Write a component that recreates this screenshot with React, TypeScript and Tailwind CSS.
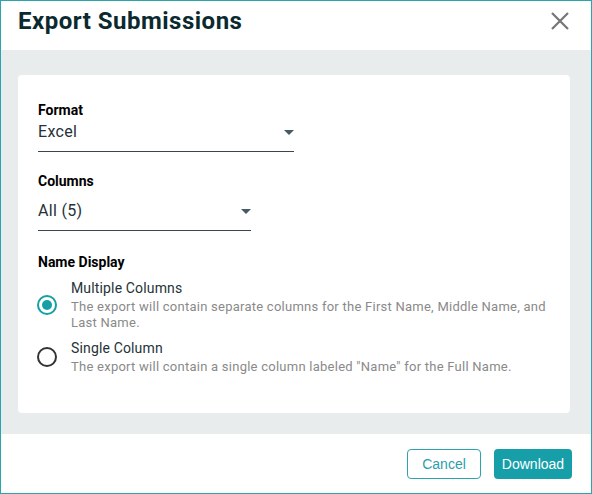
import React from "react";

const SelectField = ({
  label,
  value,
  width,
  gap,
}: {
  label: string;
  value: string;
  width: string;
  gap: string;
}) => (
  <div className="flex flex-col">
    <div className="text-[14px] leading-[20px] font-bold text-black">{label}</div>
    <div className={`${width} ${gap} flex items-center justify-between border-b border-[#37474f] pb-[7px]`}>
      <span className="text-[16px] leading-[24px] tracking-[0.3px] text-[#263238]">{value}</span>
      <svg width="10" height="5" viewBox="0 0 10 5">
        <path d="M0 0 L10 0 L5 5 Z" fill="#455a64" />
      </svg>
    </div>
  </div>
);

const RadioOption = ({
  checked,
  title,
  description,
}: {
  checked: boolean;
  title: string;
  description: string;
}) => (
  <div className="flex items-center gap-[14px]">
    <div
      className={`ml-[-1px] w-[20px] h-[20px] rounded-full border-2 flex items-center justify-center shrink-0 ${
        checked ? "border-[#169ea9]" : "border-[#333]"
      }`}
    >
      {checked && <div className="w-[10px] h-[10px] rounded-full bg-[#169ea9]" />}
    </div>
    <div className="flex flex-col">
      <div className="text-[14px] leading-[20px] tracking-[0.15px] text-[#263238]">{title}</div>
      <div className="text-[13px] leading-[16px] tracking-[0.25px] text-[#8a8a8a] mt-[1px]">{description}</div>
    </div>
  </div>
);

export default function App() {
  return (
    <div
      className="w-[592px] h-[494px] border border-[#2aa5ad] bg-white flex flex-col"
      style={{ fontFamily: "Roboto, 'Liberation Sans', sans-serif" }}
    >
      {/* Header */}
      <div className="h-[49px] flex items-start justify-between pl-[17px] pr-[21px] pt-[4px]">
        <h1 className="text-[24px] leading-[32px] font-bold tracking-[0.5px] text-[#0b2a2f]">Export Submissions</h1>
        <svg width="20" height="20" viewBox="0 0 20 20" className="mt-[6px]">
          <path d="M2 2 L18 18 M18 2 L2 18" stroke="#757575" strokeWidth="2.2" />
        </svg>
      </div>

      {/* Body */}
      <div className="h-[384px] bg-[#e9eced] pl-[17px] pr-[21px] pt-[25px]">
        <div className="h-[338px] bg-white rounded-[4px] px-[20px] pt-[25px]">
          <SelectField label="Format" value="Excel" width="w-[256px]" gap="mt-0" />
          <div className="h-[19px]" />
          <SelectField label="Columns" value="All (5)" width="w-[213px]" gap="mt-[8px]" />
          <div className="mt-[21px] text-[14px] leading-[20px] font-bold text-black">Name Display</div>
          <div className="mt-[6px] flex flex-col gap-[7px]">
            <RadioOption
              checked
              title="Multiple Columns"
              description="The export will contain separate columns for the First Name, Middle Name, and Last Name."
            />
            <RadioOption
              checked={false}
              title="Single Column"
              description='The export will contain a single column labeled "Name" for the Full Name.'
            />
          </div>
        </div>
      </div>

      {/* Footer */}
      <div className="flex-1 flex items-start justify-end gap-[13px] pr-[19px] pt-[15px]">
        <button
          className="w-[74px] h-[30px] rounded-[4px] border border-[#2aa5ad] text-[#2aa0aa] text-[14px]"
          style={{ fontFamily: "'Liberation Sans', Arial, sans-serif" }}
        >
          Cancel
        </button>
        <button
          className="w-[78px] h-[30px] rounded-[4px] bg-[#169ea9] text-white text-[14px]"
          style={{ fontFamily: "'Liberation Sans', Arial, sans-serif" }}
        >
          Download
        </button>
      </div>
    </div>
  );
}
